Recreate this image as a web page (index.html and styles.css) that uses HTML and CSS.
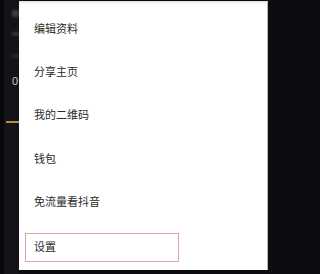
FILE: index.html
```html
<!DOCTYPE html>
<html lang="zh">
<head>
<meta charset="utf-8">
<link rel="stylesheet" href="styles.css">
</head>
<body>
<div class="screen">
  <div class="under">
    <span class="ghost g1"></span>
    <span class="ghost g2"></span>
    <span class="ghost g3"></span>
    <span class="zero">0</span>
    <span class="tab-line"></span>
  </div>
  <div class="panel">
    <div class="menu">
      <div class="item">编辑资料</div>
      <div class="item">分享主页</div>
      <div class="item">我的二维码</div>
      <div class="item">钱包</div>
      <div class="item">免流量看抖音</div>
    </div>
    <div class="item-box">设置</div>
  </div>
  <div class="edge"></div>
</div>
</body>
</html>
```
FILE: styles.css
```css
html, body {
  margin: 0;
  padding: 0;
  background: #0c0c11;
  width: 274px;
  height: 274px;
  overflow: hidden;
  font-family: "Noto Sans CJK SC", "Noto Sans", sans-serif;
}
.screen {
  display: flex;
  width: 274px;
  height: 274px;
}
.under {
  width: 19px;
  flex: none;
  overflow: hidden;
  display: flex;
  flex-direction: column;
  background: linear-gradient(to right, #08080b 0 4px, #131319 4px);
}
.ghost {
  display: block;
  margin-left: 12px;
  width: 7px;
  height: 7px;
  border-radius: 1px;
  background: #3a3a44;
  filter: blur(1px);
}
.g1 { margin-top: 10px; }
.g2 { margin-top: 15px; background: #33333b; height: 4px; }
.g3 { margin-top: 18px; background: #25252c; height: 4px; }
.zero {
  margin-top: 17px;
  padding-left: 12px;
  color: #c8c8cc;
  font-family: "Liberation Sans", sans-serif;
  font-size: 11px;
  line-height: 12px;
}
.tab-line {
  margin-top: 34px;
  margin-left: 6px;
  width: 13px;
  height: 2px;
  background: #b8912f;
}
.panel {
  width: 248px;
  flex: none;
  margin-top: 1px;
  height: 269px;
  background: #ffffff;
  box-shadow: inset 0 3px 3px -2px #d6d6d6;
  display: flex;
  flex-direction: column;
  padding-top: 5px;
  box-sizing: border-box;
}
.menu {
  display: flex;
  flex-direction: column;
}
.item {
  height: 43.4px;
  display: flex;
  align-items: center;
  padding-left: 15px;
  font-size: 11px;
  color: #2a2a2a;
}
.item-box {
  margin-top: 10px;
  margin-left: 6px;
  width: 154px;
  height: 29px;
  box-sizing: border-box;
  border: 1px solid #e2a4a6;
  display: flex;
  align-items: center;
  padding-left: 8px;
  padding-bottom: 2px;
  font-size: 11px;
  color: #2a2a2a;
}
.edge {
  width: 1px;
  flex: none;
  margin-top: 1px;
  height: 269px;
  background: #b9b9bd;
}
```
